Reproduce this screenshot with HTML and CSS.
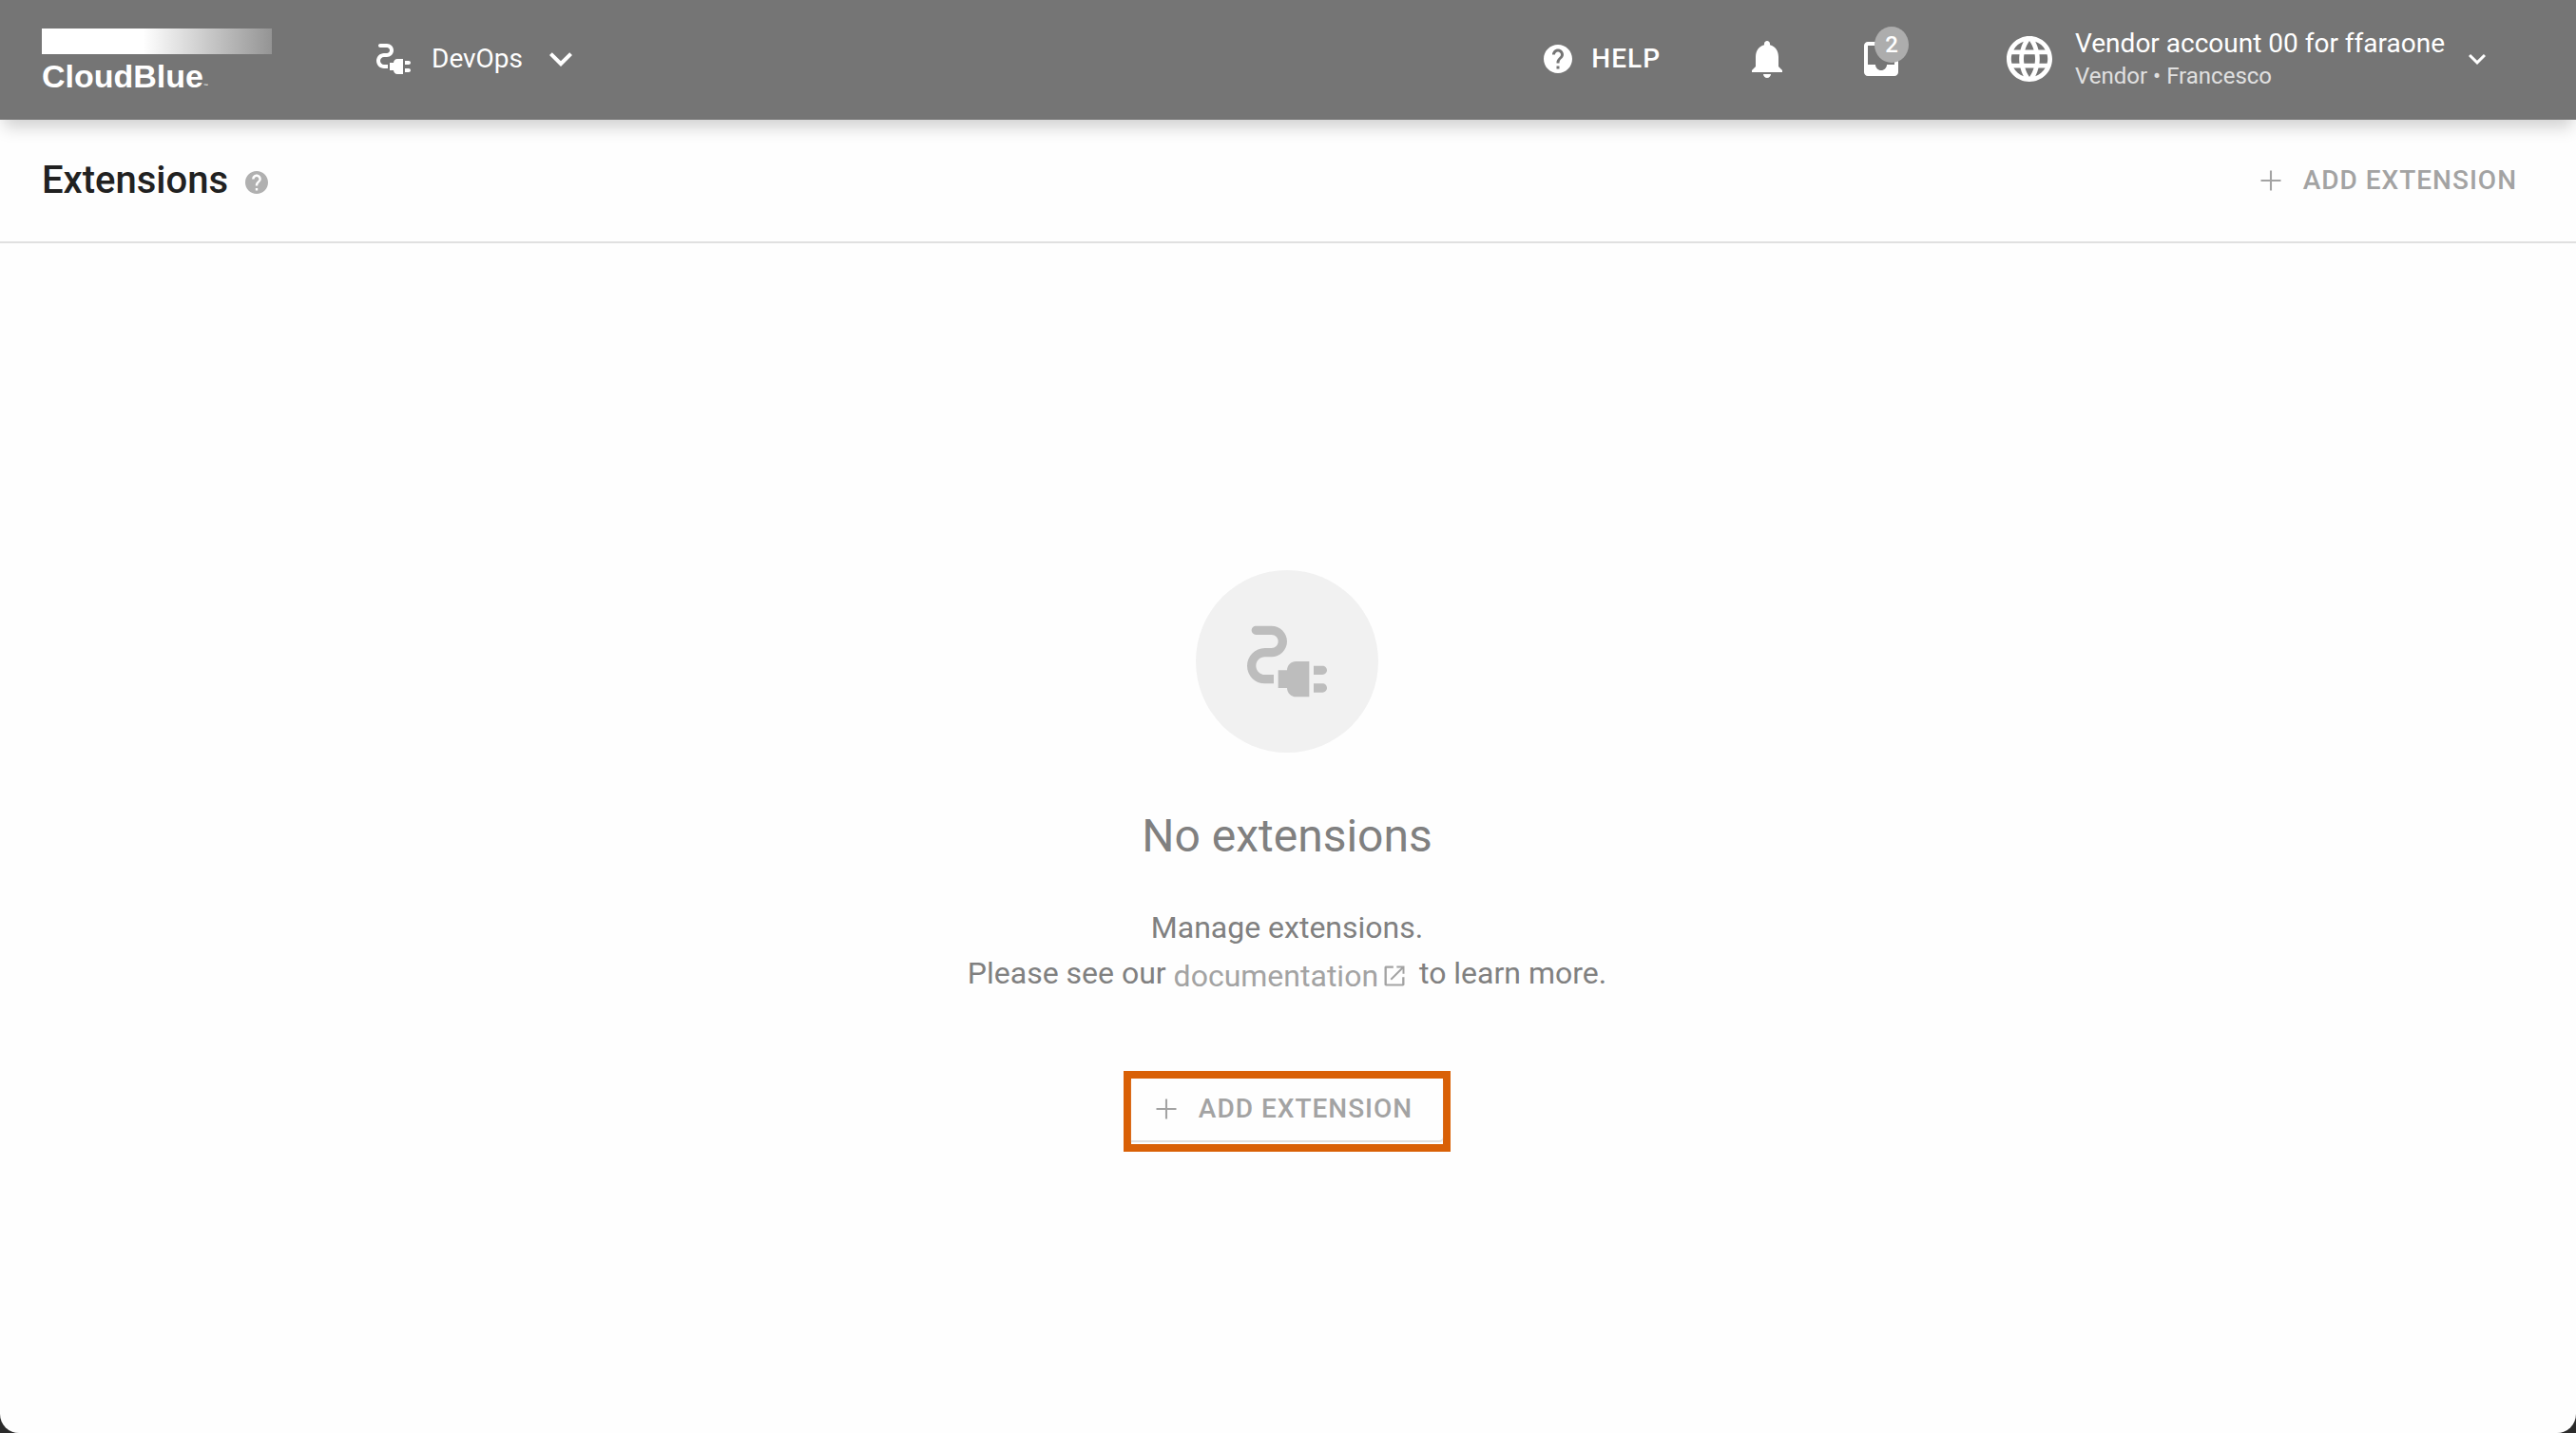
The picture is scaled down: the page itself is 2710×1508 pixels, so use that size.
FILE: index.html
```html
<!DOCTYPE html>
<html lang="en">
<head>
<meta charset="utf-8">
<meta name="viewport" content="width=device-width, initial-scale=1">
<title>Extensions</title>
<link rel="stylesheet" href="styles.css">
</head>
<body>
<svg class="defs" aria-hidden="true">
  <symbol id="plug" viewBox="0 0 24 24"><path d="M20 13h-2v2h2c.55 0 1-.45 1-1s-.45-1-1-1zM20 17h-2v2h2c.55 0 1-.45 1-1s-.45-1-1-1zM12 14h-2v4h2c0 1.100.9 2 2 2h3v-8h-3c-1.100 0-2 .9-2 2zM5 13c0-1.100.9-2 2-2h1.500c1.930 0 3.500-1.570 3.500-3.500S10.430 4 8.500 4H5c-.55 0-1 .45-1 1s.45 1 1 1h3.500c.83 0 1.500.67 1.500 1.500S9.330 9 8.500 9H7c-2.210 0-4 1.790-4 4s1.790 4 4 4h2v-2H7c-1.100 0-2-.9-2-2z"/></symbol>
  <symbol id="chevron" viewBox="0 0 24 24"><path d="M7.410 8.590 12 13.170l4.590-4.580L18 10l-6 6-6-6z"/></symbol>
  <symbol id="help" viewBox="2 2 20 20"><path d="M12 2C6.480 2 2 6.480 2 12s4.480 10 10 10 10-4.480 10-10S17.520 2 12 2zm1 17h-2v-2h2v2zm2.070-7.750-.9.920C13.450 12.900 13 13.500 13 15h-2v-.5c0-1.100.45-2.100 1.170-2.830l1.240-1.260c.37-.36.590-.86.590-1.410 0-1.100-.9-2-2-2s-2 .9-2 2H8c0-2.210 1.790-4 4-4s4 1.790 4 4c0 .88-.36 1.680-.93 2.250z"/></symbol>
  <symbol id="plus" viewBox="0 0 24 24"><path d="M19 12.700h-6.300V19h-1.400v-6.300H5v-1.400h6.300V5h1.400v6.300H19z"/></symbol>
</svg>
<div class="app">
  <header class="topbar">
    <a class="logo" href="#" aria-label="CloudBlue">
      <span class="logo-bar"></span>
      <span class="logo-name">CloudBlue<small>™</small></span>
    </a>
    <button class="module" type="button">
      <svg class="icon-lg"><use href="#plug"/></svg>
      <span class="label">DevOps</span>
      <svg class="icon-lg"><use href="#chevron"/></svg>
    </button>
    <div class="tools">
      <button class="help" type="button"><svg class="icon-help"><use href="#help"/></svg><span class="label">HELP</span></button>
      <button class="tool" type="button" aria-label="Notifications">
        <svg class="icon-lg" viewBox="0 0 24 24"><path d="M12 22c1.100 0 2-.9 2-2h-4c0 1.100.9 2 2 2zm6-6v-5c0-3.070-1.630-5.640-4.500-6.320V4c0-.83-.67-1.500-1.500-1.500s-1.500.67-1.500 1.500v.68C7.640 5.360 6 7.920 6 11v5l-2 2v1h16v-1l-2-2z"/></svg>
      </button>
      <button class="tool" type="button" aria-label="Inbox">
        <svg class="icon-lg" viewBox="0 0 24 24"><path d="M19 3H5c-1.100 0-2 .9-2 2v14c0 1.100.9 2 2 2h14c1.100 0 2-.9 2-2V5c0-1.100-.9-2-2-2zm0 12h-4c0 1.660-1.350 3-3 3s-3-1.340-3-3H5V5h14v10z"/></svg>
        <span class="badge">2</span>
      </button>
    </div>
    <button class="account" type="button">
      <svg class="icon-lg" viewBox="2 2 20 20"><path d="M11.990 2C6.470 2 2 6.480 2 12s4.470 10 9.990 10C17.520 22 22 17.520 22 12S17.520 2 11.990 2zm6.930 6h-2.950c-.32-1.250-.78-2.450-1.380-3.560 1.840.63 3.370 1.910 4.330 3.560zM12 4.040c.83 1.200 1.480 2.530 1.910 3.960h-3.820c.43-1.430 1.080-2.760 1.910-3.960zM4.260 14C4.100 13.360 4 12.690 4 12s.1-1.360.26-2h3.380c-.08.66-.14 1.320-.14 2s.06 1.340.14 2H4.260zm.82 2h2.950c.32 1.250.78 2.450 1.380 3.560-1.840-.63-3.370-1.900-4.330-3.560zm2.950-8H5.080c.96-1.660 2.490-2.930 4.330-3.560C8.810 5.550 8.350 6.750 8.030 8zM12 19.960c-.83-1.200-1.480-2.530-1.910-3.960h3.820c-.43 1.430-1.080 2.760-1.910 3.960zM14.340 14H9.660c-.09-.66-.16-1.320-.16-2s.07-1.350.16-2h4.680c.09.65.16 1.320.16 2s-.07 1.340-.16 2zm.25 5.560c.6-1.110 1.060-2.310 1.380-3.560h2.950c-.96 1.650-2.490 2.930-4.330 3.560zM16.360 14c.08-.66.14-1.320.14-2s-.06-1.340-.14-2h3.380c.16.64.26 1.310.26 2s-.1 1.360-.26 2h-3.380z"/></svg>
      <span class="account-text">
        <span class="account-name">Vendor account 00 for ffaraone</span>
        <span class="account-role">Vendor • Francesco</span>
      </span>
      <svg class="icon-md"><use href="#chevron"/></svg>
    </button>
  </header>
  <div class="titlebar">
    <h1>Extensions</h1>
    <a class="title-help" href="#" aria-label="About extensions"><svg><use href="#help"/></svg></a>
    <button class="add" type="button"><svg class="icon-md"><use href="#plus"/></svg><span class="label">ADD EXTENSION</span></button>
  </div>
  <main class="empty">
    <div class="empty-icon"><svg><use href="#plug"/></svg></div>
    <h2>No extensions</h2>
    <p>Manage extensions.<br>Please see our <a class="doc" href="#">documentation<svg viewBox="0 0 24 24"><path d="M19 19.300H5V5h6V3H4.500C3.600 3 3 3.600 3 4.500v15c0 .9.600 1.500 1.500 1.500h15c.9 0 1.500-.6 1.500-1.500V13h-2zM14 3v1.700h4.100l-9.900 9.900 1.200 1.200 9.900-9.900V10H21V3z"/></svg></a> to learn more.</p>
    <div class="highlight">
      <button class="add raised" type="button"><svg class="icon-md"><use href="#plus"/></svg><span class="label">ADD EXTENSION</span></button>
    </div>
  </main>
</div>
</body>
</html>
```

FILE: styles.css
```css
* { box-sizing: border-box; }

body {
  margin: 0;
  background: #2b2b2b;
  font-family: Roboto, "Liberation Sans", sans-serif;
  font-size: 28px;
}

button {
  display: flex;
  align-items: center;
  padding: 0;
  border: 0;
  background: none;
  color: inherit;
  font: inherit;
  white-space: nowrap;
  cursor: pointer;
}

a { color: inherit; text-decoration: none; }

svg { display: block; flex: none; fill: currentColor; }

.defs { position: absolute; width: 0; height: 0; }
.icon-md { width: 36px; height: 36px; }
.icon-lg { width: 48px; height: 48px; }
.icon-help { width: 30px; height: 30px; }
.label { padding-bottom: 2px; }

.app {
  display: flex;
  flex-direction: column;
  min-height: 100vh;
  overflow: hidden;
  border-radius: 0 0 20px 20px;
  background: #fefefe;
}

/* Top bar */
.topbar {
  position: relative;
  display: flex;
  align-items: center;
  height: 126px;
  padding: 0 86px 2px 44px;
  background: #757575;
  color: #fff;
  box-shadow: 0 12px 16px -4px rgba(0, 0, 0, .18);
}

.logo {
  display: flex;
  flex-direction: column;
  gap: 8px;
  width: 242px;
  padding-top: 10px;
}

.logo-bar {
  height: 27px;
  background: linear-gradient(90deg, #fff 44%, #949494);
}

.logo-name {
  font: bold 34px/30px "Liberation Sans", Arial, sans-serif;
}

.logo-name small { font-size: 5px; }

.module { margin-left: 104px; }
.module .label { margin: 0 16px; }

.tools { display: flex; align-items: center; margin-left: auto; }

.help { gap: 20px; margin-right: 88px; font-weight: 500; letter-spacing: 1px; }

.tool { position: relative; margin-right: 72px; }
.tool + .tool { margin-right: 108px; }

.badge {
  position: absolute;
  top: -10px;
  left: 17px;
  width: 36px;
  height: 38px;
  border-radius: 50%;
  background: #adadad;
  font-size: 24px;
  font-weight: 500;
  line-height: 38px;
  text-align: center;
}

.account { text-align: left; }
.account-text { display: flex; flex-direction: column; margin: 0 16px 0 24px; }
.account-name { line-height: 36px; }
.account-role { color: #e0e0e0; font-size: 24px; line-height: 32px; }

/* Page title */
.titlebar {
  display: flex;
  align-items: center;
  height: 130px;
  padding: 0 62px 0 44px;
  border-bottom: 2px solid #e0e0e0;
}

h1 { margin: 0; color: #212121; font-size: 40px; font-weight: 500; line-height: 48px; }
.title-help { margin-left: 18px; padding-top: 4px; color: #b0b0b0; }
.title-help svg { width: 24px; height: 24px; }

.add { gap: 16px; color: #a3a3a3; font-weight: 500; letter-spacing: 1px; }
.titlebar .add { margin-left: auto; }

/* Empty state */
.empty {
  display: flex;
  flex: 1;
  flex-direction: column;
  align-items: center;
  justify-content: center;
  padding: 96px 2px 48px 0;
  color: #808080;
  text-align: center;
}

.empty-icon {
  display: grid;
  place-items: center;
  width: 192px;
  height: 192px;
  border-radius: 50%;
  background: #f1f1f1;
  color: #bdbdbd;
}

.empty-icon svg { width: 112px; height: 112px; }

h2 { margin: 56px 0 0; font-size: 48px; font-weight: 400; line-height: 64px; }

p { margin: 40px 0 0; font-size: 32px; line-height: 48px; }

.doc {
  display: inline-flex;
  align-items: center;
  gap: 3px;
  height: 48px;
  margin-right: 4px;
  color: #a3a3a3;
  vertical-align: middle;
}

.doc svg { width: 28px; height: 28px; }

.highlight { margin-top: 76px; padding-bottom: 4px; border: 8px solid #d96006; }

.raised {
  height: 65px;
  padding: 0 32px 0 19px;
  border-radius: 0 0 4px 0;
  box-shadow: 0 2px 1px #dedede;
}
```
